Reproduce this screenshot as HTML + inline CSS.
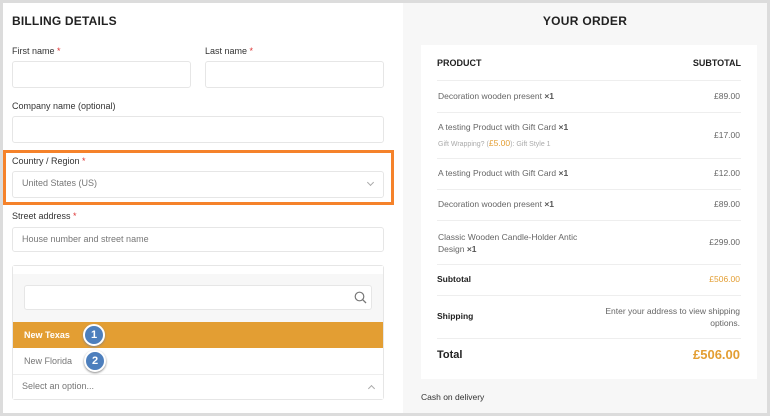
<!DOCTYPE html>
<html><head><style>
*{box-sizing:border-box;margin:0;padding:0}
body{width:770px;height:416px;background:#dcdcdc;font-family:"Liberation Sans",sans-serif;position:relative;overflow:hidden}
.a{position:absolute}
.left{left:3px;top:3px;width:400px;height:410px;background:#fff}
.right{left:403px;top:3px;width:364px;height:410px;background:#f7f7f7}
.lbl{font-size:9px;color:#333}
.req{color:#d33}
.inp{position:absolute;background:#fff;border:1px solid #e6e6e6;border-radius:3px}
.ph{font-size:9px;color:#777}
.t{font-size:8.5px;color:#666}
.hr{position:absolute;left:437px;width:304px;height:1px;background:#eee}
.badge{position:absolute;width:22px;height:22px;border-radius:50%;background:#4d7fbd;border:2px solid #fff;box-shadow:0 1px 2px #888;color:#fff;font-weight:bold;font-size:11px;text-align:center;line-height:18px}
</style></head><body>
<div class="a left"></div>
<div class="a right"></div>
<div class="a" style="left:12px;top:14px;font-size:12px;font-weight:bold;color:#222;letter-spacing:0.2px">BILLING DETAILS</div>
<div class="a lbl" style="left:12px;top:46px">First name <span class="req">*</span></div>
<div class="a lbl" style="left:205px;top:46px">Last name <span class="req">*</span></div>
<div class="inp" style="left:12px;top:61px;width:179px;height:27px"></div>
<div class="inp" style="left:205px;top:61px;width:179px;height:27px"></div>
<div class="a lbl" style="left:12px;top:101px">Company name (optional)</div>
<div class="inp" style="left:12px;top:116px;width:372px;height:27px"></div>
<div class="a" style="left:3px;top:150px;width:391px;height:55px;border:3px solid #f5822a"></div>
<div class="a lbl" style="left:12px;top:156px">Country / Region <span class="req">*</span></div>
<div class="inp" style="left:12px;top:171px;width:372px;height:27px"></div>
<div class="a ph" style="left:22px;top:178px">United States (US)</div>
<div class="a" style="left:368px;top:180px;width:5px;height:5px;border-right:1px solid #aaa;border-bottom:1px solid #aaa;transform:rotate(45deg)"></div>
<div class="a lbl" style="left:12px;top:211px">Street address <span class="req">*</span></div>
<div class="inp" style="left:12px;top:227px;width:372px;height:25px"></div>
<div class="a ph" style="left:22px;top:234px">House number and street name</div>
<div class="inp" style="left:12px;top:265px;width:372px;height:135px;background:#f7f7f7"></div>
<div class="a" style="left:13px;top:266px;width:370px;height:8px;background:#fff"></div>
<div class="inp" style="left:24px;top:285px;width:348px;height:25px"></div>
<svg class="a" style="left:354px;top:291px" width="13" height="13" viewBox="0 0 13 13"><circle cx="5.5" cy="5.5" r="4.3" fill="none" stroke="#777" stroke-width="1.2"/><path d="M8.6 8.6L12 12" stroke="#777" stroke-width="1.3"/></svg>
<div class="a" style="left:13px;top:322px;width:370px;height:26px;background:#e39e33"></div>
<div class="a" style="left:24px;top:330px;font-size:9px;font-weight:bold;color:#fff">New Texas</div>
<div class="a" style="left:13px;top:348px;width:370px;height:26px;background:#fff"></div>
<div class="a ph" style="left:24px;top:356px">New Florida</div>
<div class="a" style="left:13px;top:374px;width:370px;height:25px;background:#fff;border-top:1px solid #eee"></div>
<div class="a ph" style="left:22px;top:381px">Select an option...</div>
<div class="a" style="left:369px;top:386px;width:5px;height:5px;border-left:1px solid #aaa;border-top:1px solid #aaa;transform:rotate(45deg)"></div>
<div class="badge" style="left:83px;top:324px">1</div>
<div class="badge" style="left:84px;top:350px">2</div>

<div class="a" style="left:403px;top:14px;width:364px;text-align:center;font-size:12px;font-weight:bold;color:#222;letter-spacing:0.3px">YOUR ORDER</div>
<div class="a" style="left:421px;top:45px;width:336px;height:334px;background:#fff"></div>
<div class="a" style="left:437px;top:58px;font-size:9px;font-weight:bold;color:#222">PRODUCT</div>
<div class="a" style="left:690px;top:58px;width:51px;text-align:right;font-size:9px;font-weight:bold;color:#222">SUBTOTAL</div>
<div class="hr" style="top:80px"></div>
<div class="a t" style="left:438px;top:91px">Decoration wooden present <b style="color:#555">×1</b></div><div class="a t" style="left:660px;top:91px;width:80px;text-align:right">£89.00</div>
<div class="hr" style="top:112px"></div>
<div class="a t" style="left:438px;top:122px">A testing Product with Gift Card <b style="color:#555">×1</b></div>
<div class="a" style="left:438px;top:138px;font-size:7px;color:#aaa">Gift Wrapping? (<span style="color:#e39e33;font-size:8.5px">£5.00</span>): Gift Style 1</div>
<div class="a t" style="left:660px;top:130px;width:80px;text-align:right">£17.00</div>
<div class="hr" style="top:158px"></div>
<div class="a t" style="left:438px;top:168px">A testing Product with Gift Card <b style="color:#555">×1</b></div><div class="a t" style="left:660px;top:168px;width:80px;text-align:right">£12.00</div>
<div class="hr" style="top:189px"></div>
<div class="a t" style="left:438px;top:199px">Decoration wooden present <b style="color:#555">×1</b></div><div class="a t" style="left:660px;top:199px;width:80px;text-align:right">£89.00</div>
<div class="hr" style="top:220px"></div>
<div class="a t" style="left:438px;top:231px;line-height:12px">Classic Wooden Candle-Holder Antic<br>Design <b style="color:#555">×1</b></div><div class="a t" style="left:660px;top:237px;width:80px;text-align:right">£299.00</div>
<div class="hr" style="top:264px"></div>
<div class="a" style="left:437px;top:274px;font-size:8.5px;font-weight:bold;color:#222">Subtotal</div><div class="a" style="left:660px;top:274px;width:80px;text-align:right;font-size:8.5px;color:#e39e33">£506.00</div>
<div class="hr" style="top:295px"></div>
<div class="a" style="left:437px;top:311px;font-size:8.5px;font-weight:bold;color:#222">Shipping</div>
<div class="a t" style="left:580px;top:305px;width:160px;text-align:right;line-height:12px">Enter your address to view shipping options.</div>
<div class="hr" style="top:338px"></div>
<div class="a" style="left:437px;top:349px;font-size:11px;font-weight:bold;color:#222">Total</div>
<div class="a" style="left:640px;top:347px;width:100px;text-align:right;font-size:13px;font-weight:bold;color:#e39e33">£506.00</div>
<div class="a" style="left:421px;top:392px;font-size:8.5px;color:#333">Cash on delivery</div>
</body></html>
